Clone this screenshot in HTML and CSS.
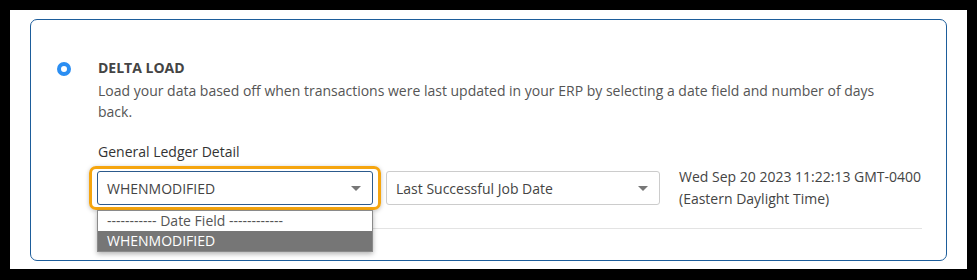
FILE: index.html
```html
<!DOCTYPE html>
<html lang="en">
<head>
    <meta charset="UTF-8">
    <meta name="viewport" content="width=device-width, initial-scale=1.0">
    <title>Delta Load</title>
    <link rel="stylesheet" href="styles.css">
</head>
<body>
    <div class="frame">
        <div class="card">
            <div class="radio"></div>
            <div class="content">
                <h2 class="title">DELTA LOAD</h2>
                <p class="desc">Load your data based off when transactions were last updated in your ERP by selecting a date field and number of days back.</p>
                <div class="label">General Ledger Detail</div>
                <div class="row">
                    <div class="focus-ring">
                        <div class="select-wrap">
                            <div class="select active">
                                <span>WHENMODIFIED</span>
                                <span class="arrow"></span>
                            </div>
                            <ul class="dropdown">
                                <li>----------- Date Field ------------</li>
                                <li class="selected">WHENMODIFIED</li>
                            </ul>
                        </div>
                    </div>
                    <div class="select">
                        <span>Last Successful Job Date</span>
                        <span class="arrow"></span>
                    </div>
                    <div class="job-date">Wed Sep 20 2023 11:22:13 GMT-0400<br>(Eastern Daylight Time)</div>
                </div>
                <div class="divider"></div>
            </div>
        </div>
    </div>
</body>
</html>
```

FILE: styles.css
```css
* {
    box-sizing: border-box;
    margin: 0;
    padding: 0;
}

body {
    background-color: #000;
    font-family: 'Open Sans', 'Noto Sans', sans-serif;
    font-size: 14px;
    line-height: 21px;
    color: #555;
    padding: 10px 10px 11px 10px;
}

.frame {
    background-color: #fff;
    padding: 9px 20px;
    height: 259px;
}

.card {
    display: flex;
    align-items: flex-start;
    border: 1px solid #1d5d9b;
    border-radius: 7px;
    padding: 37px 24px 31px 26px;
}

.radio {
    flex: none;
    width: 14px;
    height: 14px;
    margin-top: 5px;
    margin-right: 27px;
    border-radius: 50%;
    border: 4px solid #2b8ef2;
    background-color: #fff;
}

.content {
    flex: 1;
}

.title {
    font-size: 14px;
    font-weight: 700;
    color: #444;
    line-height: 21px;
    margin-bottom: 2px;
}

.desc {
    max-width: 790px;
    color: #555;
    margin-bottom: 19px;
}

.label {
    color: #333;
    margin-bottom: 4px;
}

.row {
    display: flex;
    align-items: center;
}

.focus-ring {
    margin-left: -9px;
    margin-right: 5px;
    padding: 2px 5px;
    border: 3px solid #f5a50f;
    border-radius: 7px;
    box-shadow: 0 1px 4px rgba(0, 0, 0, 0.25);
}

.select-wrap {
    position: relative;
}

.select {
    display: flex;
    align-items: center;
    justify-content: space-between;
    width: 274px;
    height: 34px;
    padding: 0 11px 0 9px;
    border: 1px solid #ccc;
    border-radius: 3px;
    color: #444;
    background-color: #fff;
}

.select.active {
    width: 276px;
    border-color: #2c5a8c;
}

.arrow {
    width: 0;
    height: 0;
    border-left: 5px solid transparent;
    border-right: 5px solid transparent;
    border-top: 5px solid #777;
}

.dropdown {
    position: absolute;
    top: 39px;
    left: 0;
    width: 276px;
    list-style: none;
    background-color: #fff;
    border: 1px solid #8a8a8a;
    box-shadow: 0 2px 5px rgba(0, 0, 0, 0.3);
    z-index: 2;
}

.dropdown li {
    height: 20px;
    line-height: 20px;
    padding-left: 9px;
    color: #555;
}

.dropdown li.selected {
    background-color: #767676;
    color: #fff;
}

.job-date {
    margin-left: 19px;
    color: #444;
    line-height: 22px;
}

.divider {
    margin-top: 18px;
    border-top: 1px solid #e3e3e3;
}
```
